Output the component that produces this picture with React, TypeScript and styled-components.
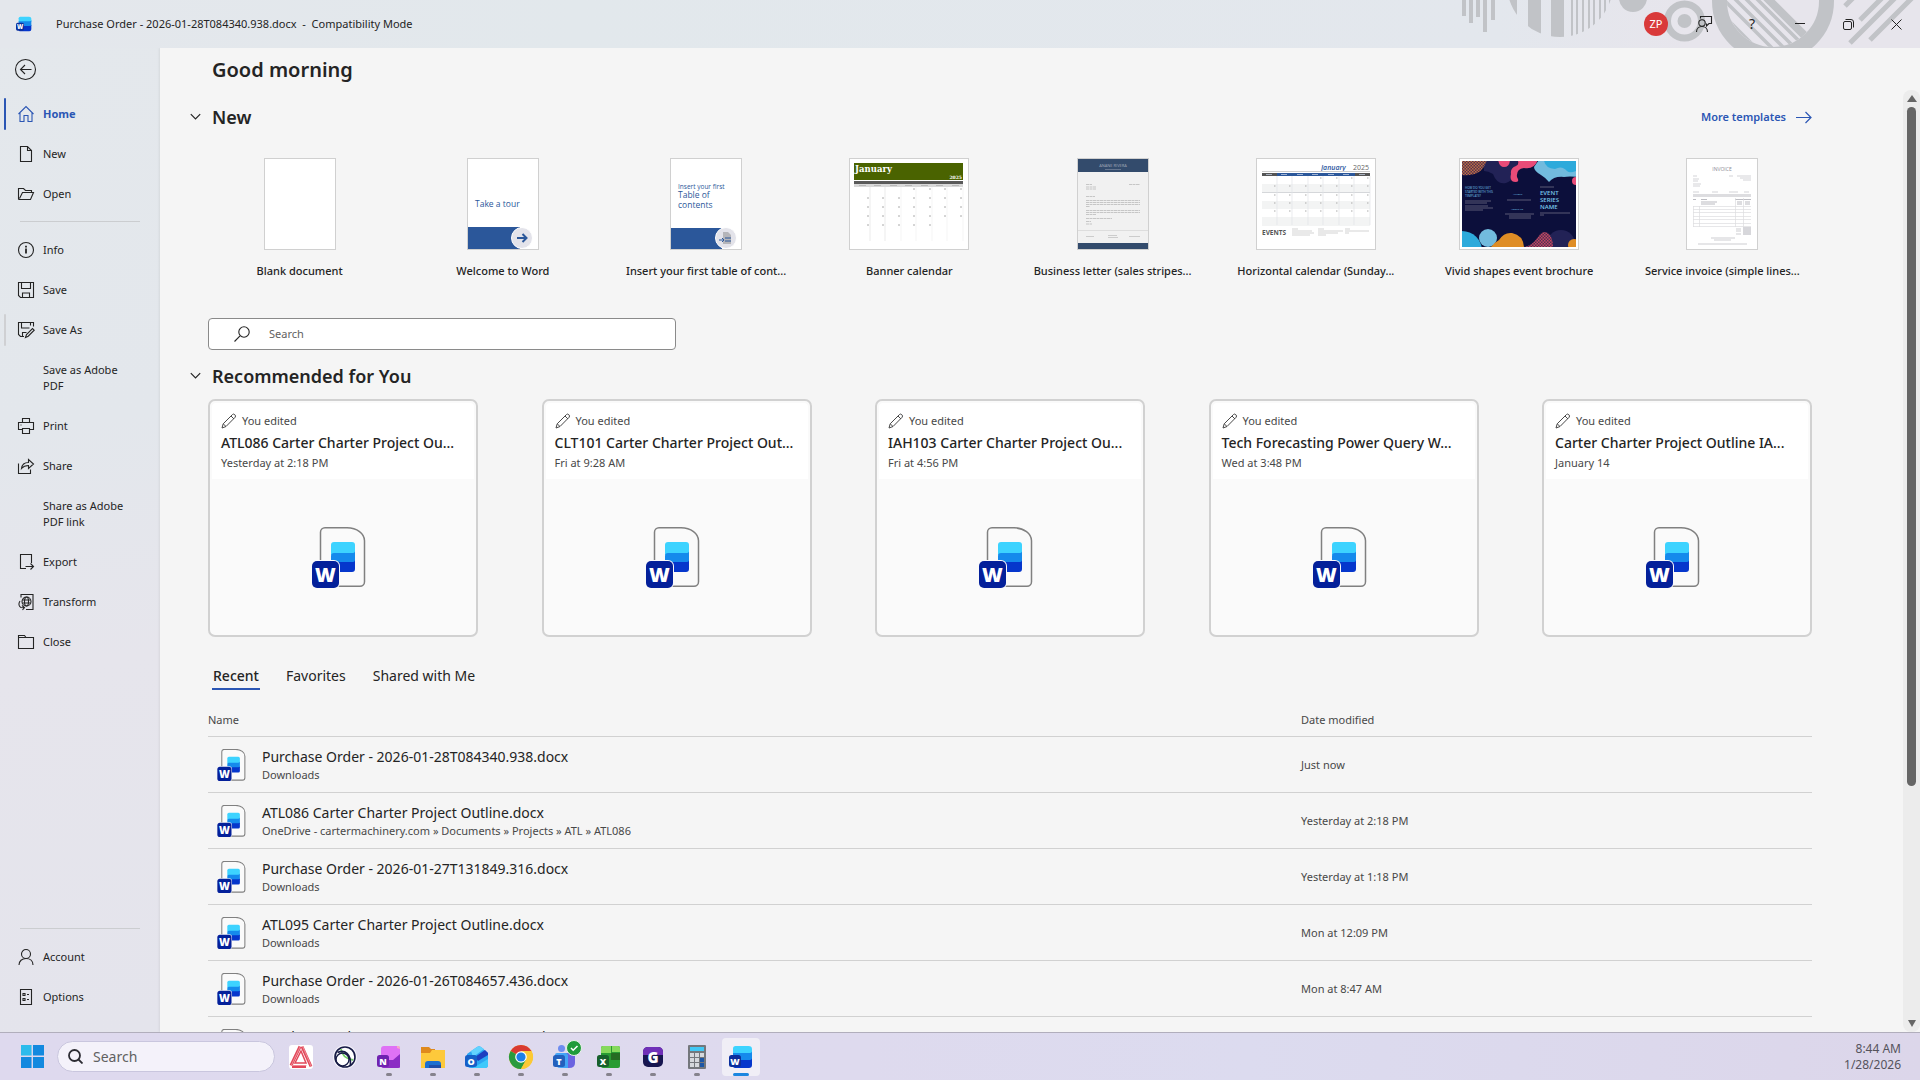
import React from "react";
import styled, { createGlobalStyle } from "styled-components";

const ink = "#242424";
const soft = "#484848";
const blue = "#2b56b4";
const hair = "#d1d1d1";

const Global = createGlobalStyle`
  *, *::before, *::after { box-sizing: border-box; }
  body { margin: 0; color: ${ink}; font: 11px/16px "Noto Sans", "Open Sans", sans-serif; }
  button, input { font: inherit; color: inherit; }
  button { border: 0; padding: 0; background: none; text-align: left; }
  a { color: inherit; text-decoration: none; }
  h1, h2, p, ul { margin: 0; padding: 0; }
  ul { list-style: none; }
  svg { display: block; flex: none; }
`;

const Screen = styled.div`
  display: grid;
  grid-template-rows: 48px minmax(0, 1fr) 48px;
  height: 100vh;
  overflow: hidden;
  background: linear-gradient(172deg, #e4e8ec 0, #e3e7ec 32%, #e6e5ec 50%, #e4e4ec 78%, #dfe2ea 100%);
`;

/* ---------- title bar ---------- */
const TitleBar = styled.header`
  position: relative;
  display: flex;
  align-items: center;
  padding-left: 16px;
  overflow: hidden;
  background: linear-gradient(90deg, #e4e7ec, #e2e8ec 30%, #e3e7ed 78%, #e7e5ec 88%);
`;
const Pattern = styled.svg`
  position: absolute;
  top: 0;
  right: 0;
`;
const DocTitle = styled.span`
  flex: 1;
  margin-left: 24px;
  white-space: pre;
`;
const Avatar = styled.button`
  position: relative;
  width: 24px;
  height: 24px;
  margin-right: 12px;
  border-radius: 50%;
  background: #d93a3a;
  color: #fff;
  text-align: center;
`;
const WindowButton = styled.button`
  position: relative;
  display: grid;
  place-items: center;
  width: 48px;
  height: 48px;
  font-size: 14px;
`;

/* ---------- sidebar ---------- */
const Body = styled.div`
  display: grid;
  grid-template-columns: 160px minmax(0, 1fr);
  min-height: 0;
`;
const Sidebar = styled.nav`
  display: flex;
  flex-direction: column;
  padding: 10px 0 15px;
`;
const BackButton = styled.button`
  width: 24px;
  height: 24px;
  margin: 0 0 12px 14px;
`;
const NavItem = styled.button<{ $mark?: string; $active?: boolean; $tall?: boolean }>`
  display: flex;
  align-items: center;
  gap: 8px;
  height: ${(p) => (p.$tall ? 56 : 40)}px;
  padding: 0 32px 0 13px;
  margin-left: 4px;
  position: relative;
  color: ${(p) => (p.$active ? blue : ink)};
  font-weight: ${(p) => (p.$active ? 700 : 400)};
  &::before {
    content: "";
    position: absolute;
    left: 0;
    width: 2px;
    height: 32px;
    border-radius: 1px;
    background: ${(p) => p.$mark ?? "transparent"};
  }
`;
const IconSlot = styled.span`
  display: grid;
  place-items: center;
  flex: none;
  width: 18px;
`;
const NavRule = styled.hr`
  width: 120px;
  height: 1px;
  margin: 7px 20px 8px;
  border: 0;
  background: #cbcdd0;
`;
const Spacer = styled.div`
  flex: 1;
`;

/* ---------- main pane ---------- */
const Pane = styled.main`
  display: flex;
  flex-direction: column;
  min-height: 0;
  background: #f5f5f5;
  box-shadow: 0 0 3px rgba(0, 0, 0, 0.12);
`;
const Greeting = styled.h1`
  flex: none;
  height: 42px;
  padding-left: 52px;
  font-size: 20px;
  line-height: 44px;
  font-weight: 600;
`;
const ScrollArea = styled.div`
  flex: 1;
  display: flex;
  min-height: 0;
`;
const Content = styled.div`
  flex: 1;
  min-width: 0;
  padding: 11px 91px 0 48px;
  overflow: hidden;
`;
const SectionHead = styled.div`
  display: flex;
  align-items: center;
  justify-content: space-between;
  height: 32px;
  margin-left: -24px;
`;
const SectionToggle = styled.button`
  display: flex;
  align-items: center;
  gap: 11px;
  padding-left: 6px;
`;
const SectionTitle = styled.h2`
  font-size: 18px;
  line-height: 32px;
  font-weight: 600;
`;
const MoreLink = styled.a`
  display: flex;
  align-items: center;
  gap: 10px;
  color: ${blue};
  font-weight: 600;
`;
const Templates = styled.ul`
  display: grid;
  grid-template-columns: repeat(8, minmax(0, 1fr));
  margin: 25px -12px 37px -10px;
`;
const Template = styled.button`
  display: flex;
  flex-direction: column;
  align-items: center;
  gap: 11px;
  width: 100%;
  font-weight: 500;
  line-height: 20px;
`;
const Thumb = styled.span<{ $w: number }>`
  width: ${(p) => p.$w}px;
  height: 92px;
  border: 1px solid #d0d0d0;
  background: #fff;
  overflow: hidden;
`;
const SearchBox = styled.label`
  display: flex;
  align-items: center;
  gap: 19px;
  width: 468px;
  height: 32px;
  margin-bottom: 10px;
  padding-left: 25px;
  border: 1px solid #8a8a8a;
  border-radius: 4px;
  background: #fff;
`;
const SearchInput = styled.input`
  flex: 1;
  min-width: 0;
  padding: 0;
  border: 0;
  outline: 0;
  background: transparent;
  &::placeholder { color: #616161; opacity: 1; }
`;
const Cards = styled.ul`
  display: flex;
  justify-content: space-between;
  margin: 7px 0 27px;
`;
const Card = styled.a`
  display: flex;
  flex-direction: column;
  width: 270px;
  height: 238px;
  padding: 2px;
  border: 2px solid ${hair};
  border-radius: 7px;
  background: #fafafa;
`;
const CardHead = styled.div`
  height: 76px;
  padding: 6px 9px 0;
  border-radius: 4px 4px 0 0;
  background: #fff;
  color: ${soft};
`;
const CardNote = styled.p`
  display: flex;
  align-items: center;
  gap: 5px;
  line-height: 24px;
`;
const CardTitle = styled.p`
  color: ${ink};
  font-size: 14px;
  line-height: 20px;
  font-weight: 500;
  white-space: nowrap;
`;
const CardDate = styled.p`
  line-height: 20px;
`;
const CardArt = styled.div`
  flex: 1;
  display: grid;
  place-items: center;
  padding: 2px 8px 0 0;
`;
const Tabs = styled.div`
  display: flex;
  gap: 25px;
  padding-left: 4px;
  font-size: 14px;
`;
const Tab = styled.button<{ $on?: boolean }>`
  height: 26px;
  padding: 0 1px;
  line-height: 24px;
  border-bottom: 2px solid ${(p) => (p.$on ? blue : "transparent")};
  font-weight: ${(p) => (p.$on ? 500 : 400)};
`;
const Files = styled.table`
  width: 100%;
  margin-top: 15px;
  border-collapse: collapse;
  color: ${soft};
`;
const HeadCell = styled.th<{ $w?: string }>`
  height: 31px;
  padding: 0;
  width: ${(p) => p.$w ?? "auto"};
  border-bottom: 1px solid ${hair};
  font-weight: 400;
  text-align: left;
`;
const Cell = styled.td`
  height: 56px;
  padding: 2px 0 0;
  border-bottom: 1px solid ${hair};
`;
const FileLink = styled.a`
  display: flex;
  align-items: center;
  gap: 16px;
  padding-left: 9px;
`;
const FileName = styled.span`
  display: block;
  color: ${ink};
  font-size: 14px;
  line-height: 20px;
`;
const FilePlace = styled.span`
  display: block;
`;

const Track = styled.div`
  display: flex;
  flex-direction: column;
  align-items: center;
  justify-content: space-between;
  width: 17px;
  padding: 5px 0;
  border-radius: 8px;
  background: #ececec;
`;
const Thumbbar = styled.div`
  flex: 0 0 679px;
  width: 9px;
  margin-top: 5px;
  border-radius: 5px;
  background: #666;
`;

/* ---------- taskbar ---------- */
const Taskbar = styled.footer`
  display: flex;
  align-items: center;
  padding: 0 19px 0 21px;
  border-top: 1px solid #b1aebc;
  background: linear-gradient(90deg, #ded9ee, #dedaee 45%, #dcdbef 65%, #dcd6ea);
`;
const TaskSearch = styled.label`
  display: flex;
  align-items: center;
  gap: 10px;
  width: 218px;
  height: 31px;
  margin: 0 4px 0 13px;
  padding-left: 10px;
  border: 1px solid #c9c6de;
  border-radius: 16px;
  background: #f4f2fa;
  font-size: 14px;
`;
const TaskButton = styled.button<{ $state?: "open" | "active" }>`
  position: relative;
  display: grid;
  place-items: center;
  width: 38px;
  height: 38px;
  margin: 0 3px;
  border-radius: 4px;
  background: ${(p) => (p.$state === "active" ? "#f0eef6" : "none")};
  &::after {
    content: "";
    position: absolute;
    bottom: 0;
    left: 50%;
    width: ${(p) => (p.$state === "active" ? 16 : p.$state ? 6 : 0)}px;
    height: 3px;
    border-radius: 2px;
    transform: translateX(-50%);
    background: ${(p) => (p.$state === "active" ? "#1a86e0" : "#85828c")};
  }
`;
const Clock = styled.time`
  margin-left: auto;
  color: #55535c;
  font-size: 12px;
  text-align: right;
`;

/* ---------- drawings ---------- */
const paths: Record<string, React.ReactNode> = {
  home: <path d="M1.500 9 9 1.500 16.500 9M3 7.500v9h4V10.500h4v6h4V7.500" />,
  page: <path d="M3.500 1.500h7l4 4v11h-11zM10.500 1.500v4h4" />,
  open: <path d="M1.500 14.500v-11h5l2 2h6v2.500M1.500 14.500h12l3-7H5.500l-3 6" />,
  info: (
    <>
      <circle cx="9" cy="9" r="7.500" />
      <path d="M9 7.500v5M9 4.800v1.600" strokeWidth="1.800" />
    </>
  ),
  save: <path d="M1.500 1.500h15v15h-13l-2-2zM4.500 1.500v6h9v-6M5.500 16.500v-4.500h7v4.500" />,
  saveAs: (
    <>
      <path d="M7 15.500H3.500l-2-2v-12h15v4M4.500 1.500v5.500h8M5.500 15.500v-4h4M13.500 1.500v3" />
      <path d="m8.500 16.500 1-3L15.500 7.500l1.700 1.700-6 6z" />
    </>
  ),
  print: <path d="M5.500 5.500v-4h7v4M5.500 12.500h-4v-7h15v7h-4M5.500 11.500h7v5h-7zM3.500 8h1" />,
  share: <path d="M1.500 6.500v10h12v-4M4.500 11.500c.5-4 3-6 7-6V2.500l5 4.500-5 4.500V8.500c-3 0-5 .7-7 3z" />,
  exportDoc: <path d="M9 15.500H3.500v-14h11V10M8.500 13.500h8M13.500 10.500l3 3-3 3" />,
  transform: (
    <>
      <path d="M4 4.500v-3h12v15H9M3 8c-2 3-1 5.500 1 6.500l3 .3M5 12.500l2.500 2-2 2.500" />
      <circle cx="9.500" cy="8.500" r="4.500" />
      <ellipse cx="9.500" cy="8.500" rx="2" ry="4.500" />
      <path d="M5.500 7h8M5.500 10h8" />
    </>
  ),
  close: <path d="M1.500 15.500v-13h6l1.500 2h7.500v11zM1.500 4.500h7" />,
  account: (
    <>
      <circle cx="9" cy="6" r="4.500" />
      <path d="M2 17c0-4 3-6.500 7-6.500s7 2.500 7 6.500" />
    </>
  ),
  options: <path d="M3.500 1.500h11v15h-11zM6 5.500h2v2H6zM6 10.500h2v2H6zM10 6.500h2M10 11.500h2" />,
};
const Glyph = ({ name }: { name: string }) => (
  <svg width="18" height="18" viewBox="0 0 18 18" fill="none" stroke="currentColor" strokeWidth="1.100" aria-hidden="true">
    {paths[name]}
  </svg>
);

const Chevron = () => (
  <svg width="11" height="8" viewBox="0 0 11 8" fill="none" stroke={ink} strokeWidth="1.200">
    <path d="m.8 1.200 4.700 4.700 4.700-4.700" />
  </svg>
);

const WordFile = ({ width, height }: { width: number; height: number }) => (
  <svg width={width} height={height} viewBox="0 0 54 61" aria-hidden="true">
    <path d="M13 .8h22c10 0 17.500 6 17.500 13v41a4.500 4.500 0 0 1-4.500 4.500H13a4.500 4.500 0 0 1-4.500-4.500v-49.500A4.500 4.500 0 0 1 13 .8z" fill="#fafafa" stroke="#808080" strokeWidth={width < 40 ? 2 : 1.5} />
    <path d="M19 18q0-3 3-3h18q3 0 3 3v7q0 3-3 3H19z" fill="#3dd3ff" />
    <path d="M19 29q0-3 3-3h18q3 0 3-2v10q0 3-3 3H19z" fill="#158aec" />
    <path d="M19 38q0-3 3-3h18q3 0 3-2v9q0 3-3 3H19z" fill="#0536cc" />
    <rect x="-1" y="33" width="29" height="29" rx="6" fill="#fafafa" />
    <rect x="0" y="34" width="27" height="27" rx="5" fill="#04209a" />
    <text x="13.500" y="55" textAnchor="middle" fill="#fff" fontFamily="Open Sans, sans-serif" fontWeight="800" fontSize="20">W</text>
  </svg>
);

const AppTile = ({ kind, size = 24 }: { kind: string; size?: number }) => {
  const letter = (t: string, fill: string) => (
    <>
      <rect x="0" y="10" width="12" height="12" rx="2.500" fill={fill} />
      <text x="6" y="19.500" textAnchor="middle" fill="#fff" fontFamily="Open Sans, sans-serif" fontWeight="800" fontSize="9">{t}</text>
    </>
  );
  const art: Record<string, React.ReactNode> = {
    word: (
      <>
        <path d="M4 3.500Q4 1 6.500 1h13Q23 1 23 4v5H4z" fill="#3dd3ff" />
        <path d="M4 8h16q3 0 3-2v9H4z" fill="#158aec" />
        <path d="M4 15h16q3 0 3-2v7q0 3-3 3H6q-2 0-2-2z" fill="#0536cc" />
        {letter("W", "#0b2f9c")}
      </>
    ),
    onenote: (
      <>
        <path d="M4 4q0-3 3-3h14q2 0 2 3v18q0 1-2 1H7q-3 0-3-3z" fill="#df72f5" />
        <path d="M4 15h12l7-6v13q0 1-2 1H7q-3 0-3-3z" fill="#8b2cc4" />
        <path d="M20 1h1q2 0 2 3l-3-1z" fill="#f7a9c4" />
        {letter("N", "#7022b0")}
      </>
    ),
    folder: (
      <>
        <path d="M0 2h8l2 2h4v6H0z" fill="#df8a1d" />
        <path d="M0 8h9l2-3h13v18H0z" fill="#fdc93b" />
        <path d="M4 23v-4q0-3 3-3h10q3 0 3 3v4z" fill="#1b6fd0" />
        <path d="M8 20h12v3H8z" fill="#1d4da8" />
      </>
    ),
    outlook: (
      <>
        <path d="M2 9 12 2q2-1.500 4 0l7 6v12q0 3-3 3H6q-4 0-4-4z" fill="#2ba7f3" />
        <path d="m6 6 6-4q2-1.500 4 0l3 2-11 8z" fill="#63d3ff" />
        <path d="M10 12 20 5l3 3v2l-10 6z" fill="#1c3fc0" />
        <path d="m8 23 15-9v6q0 3-3 3z" fill="#3ec9fb" />
        {letter("O", "#1560c8")}
      </>
    ),
    chrome: (
      <>
        <circle cx="12" cy="12" r="12" fill="#fcc934" />
        <path d="M12 12 1.600 6A12 12 0 0 1 22.400 6z" fill="#d93a32" />
        <path d="M12 12 1.600 6A12 12 0 0 0 12 24l5-9z" fill="#299a3e" />
        <path d="M12 6h10.400A12 12 0 0 1 12 24l5-9z" fill="#fcc934" />
        <circle cx="12" cy="12" r="5.800" fill="#fff" />
        <circle cx="12" cy="12" r="4.600" fill="#1f7fe8" />
      </>
    ),
    teams: (
      <>
        <circle cx="8.500" cy="3.500" r="3.500" fill="#6d8cf0" />
        <path d="M10 8h12v10q0 5-6 5h-6z" fill="#6b63e0" />
        <path d="M2 10q0-2 2-2h8q3 0 3 3v12H8q-6 0-6-6z" fill="#43a4f5" />
        {letter("T", "#2360bd")}
        <circle cx="21" cy="3" r="7.500" fill="#1f9b3a" stroke="#e5f2e8" />
        <path d="m18 3 2.200 2.200L24.500 1" stroke="#fff" strokeWidth="1.500" fill="none" />
      </>
    ),
    excel: (
      <>
        <path d="M4 3q0-2 2-2h15q2 0 2 2v18q0 2-2 2H6q-2 0-2-2z" fill="#279b32" />
        <path d="M4 3q0-2 2-2h8v7H4zM15 1h6q2 0 2 2v4h-8z" fill="#86d95c" />
        <path d="M14 8h9v7h-9z" fill="#256c22" />
        {letter("X", "#17602c")}
      </>
    ),
    gapp: (
      <>
        <rect x="2" y="2" width="20" height="20" rx="5" fill="#171650" />
        <path d="M2 10V7q0-5 5-5h10q5 0 5 5v3z" fill="#7030b8" />
        <text x="12" y="17.500" textAnchor="middle" fill="#fff" fontFamily="Open Sans, sans-serif" fontWeight="800" fontSize="15">G</text>
      </>
    ),
    calc: (
      <>
        <rect x="3" y="0" width="18" height="24" rx="1" fill="#74777c" />
        <rect x="5" y="2" width="14" height="4" fill="#42c8f5" />
        {[8, 13, 18].map((y) => [5, 10, 15].map((x) => (
          <rect key={`${x}-${y}`} x={x} y={y} width="4" height="4" fill={x === 15 && y > 8 ? "#1d56a5" : "#d5d8dc"} />
        )))}
      </>
    ),
    anchor: (
      <>
        <rect width="24" height="24" rx="3" fill="#fff" />
        <path d="M11 1.500 2 20.500M13 1.500l9 20M3 21.500h14" fill="none" stroke="#e2485a" strokeWidth="3" />
        <path d="M12 6 6 18h11z" fill="#fff" stroke="#e2485a" strokeWidth="1.500" />
        <path d="M11.500 1 2 21M13.500 1 22 21M3 20.500h15" fill="none" stroke="#f8b7bd" strokeWidth=".6" />
      </>
    ),
    orb: (
      <>
        <circle cx="12" cy="12" r="12" fill="#f4f2fa" />
        <circle cx="12" cy="12" r="10" fill="#fff" stroke="#161a45" strokeWidth="1.600" />
        <path d="M8 4q1 9 12 11" fill="none" stroke="#6fce62" strokeWidth="1.800" />
        <path d="M4.500 7.500C12 4 18 9 17.500 20" fill="none" stroke="#161a45" strokeWidth="1.600" />
        <circle cx="9.500" cy="14.500" r="6.500" fill="none" stroke="#161a45" strokeWidth="1.400" />
      </>
    ),
    start: (
      <>
        <path d="M0 0h11v11H0z" fill="#2cbbec" />
        <path d="M12.500 0h11.500v11H12.500zM0 12.500h11V24H0zM12.500 12.500H24V24H12.500z" fill="#1389df" />
      </>
    ),
  };
  return (
    <svg width={size} height={size} viewBox="0 0 24 24" overflow="visible" aria-hidden="true">
      {art[kind]}
    </svg>
  );
};

const grey = "#c1c3c7";
const TitlePattern = () => (
  <Pattern width="520" height="48" viewBox="0 0 520 48" fill={grey} aria-hidden="true">
    <clipPath id="disc"><circle cx="160" cy="-16" r="53" /></clipPath>
    <clipPath id="well"><circle cx="373" cy="1" r="46" /></clipPath>
    <path d="M62 0h4v16h-4zM69 0h4v23h-4zM76 0h4v17h-4zM83 0h4v32h-4zM91 0h4v20h-4z" />
    <g clipPath="url(#disc)">
      <path d="M105 0h12v40h-12zM128 0h13v40h-13zM151 0h13v40h-13z" />
      {[171, 176, 182, 188, 193, 199, 204, 209].map((x) => <rect key={x} x={x} width="2" height="40" />)}
    </g>
    <circle cx="233" cy="-2" r="14" />
    <circle cx="284.500" cy="21" r="17" fill="none" stroke={grey} strokeWidth="7" />
    <circle cx="284.500" cy="21" r="7" />
    <circle cx="373" cy="1" r="53.500" fill="none" stroke={grey} strokeWidth="15" />
    <g clipPath="url(#well)" stroke={grey}>
      <path d="m312 4 60 60M324 0l60 60M334-2l60 60M343-4l60 60M352-6l60 60" strokeWidth="3.500" />
      <path d="m363-6 60 60" strokeWidth="8" />
    </g>
    <path d="m445 6 8-8M460 20l22-22M450 43l46-46M470 40l44-44" stroke={grey} strokeWidth="5" />
  </Pattern>
);

const font = "Open Sans, sans-serif";
const BlankArt = () => null;
const TourArt = () => (
  <svg width="70" height="90" viewBox="0 0 70 90">
    <text x="7" y="48" fill="#2b579a" fontFamily={font} fontSize="8.500">Take a tour</text>
    <path d="M0 68h70v22H0z" fill="#2b579a" />
    <path d="M52 68h18v22H52z" fill="#fff" />
    <circle cx="54" cy="79" r="10.500" fill="#e3e3ea" stroke="#fff" />
    <path d="M49 79h9M54.500 75l4 4-4 4" fill="none" stroke="#2b579a" strokeWidth="2" />
  </svg>
);
const TocArt = () => (
  <svg width="70" height="90" viewBox="0 0 70 90">
    <g fill="#2b579a" fontFamily={font}>
      <text x="7" y="30" fontSize="6.500">Insert your first</text>
      <text x="7" y="39" fontSize="8.500">Table of</text>
      <text x="7" y="49" fontSize="8.500">contents</text>
    </g>
    <path d="M0 69h51v21H0z" fill="#2b579a" />
    <circle cx="55" cy="79" r="10.500" fill="#e3e3ea" stroke="#fff" />
    <path d="M52 73h5l3 3v9h-8z" fill="#b5b5b9" />
    <path d="M48 81h4M51 79l2 2-2 2M54 79h6M54 82h6" stroke="#2b579a" fill="none" />
  </svg>
);
const BannerArt = () => (
  <svg width="118" height="90" viewBox="0 0 118 90">
    <path d="M4 4h109v17H4z" fill="#4a6300" />
    <text x="5" y="12.500" fill="#fff" fontFamily="DejaVu Serif, serif" fontWeight="700" fontSize="8.500">January</text>
    <text x="112" y="19.500" textAnchor="end" fill="#fff" fontFamily="DejaVu Serif, serif" fontWeight="700" fontSize="4.500">2025</text>
    <path d="M4 22h109v3H4z" fill="#5a5a5a" />
    <path d="M4 25h109v3H4z" fill="#d8d8d8" />
    {[20, 35, 51, 66, 82, 97, 113].map((x, i) => (
      <g key={x}>
        <path d={`M${x} 28v54`} stroke="#ebebeb" strokeWidth={i < 2 ? 1 : 0.5} />
        <path d={`M${x - 11} 26.500h7`} stroke="#aaa" strokeWidth=".7" />
        {[30, 39, 48, 57, 66].map((y, r) => ((r || i > 2) && (r < 4 || i < 5) ? <path key={y} d={`M${x - 3} ${y}h2`} stroke="#aaa" /> : null))}
      </g>
    ))}
  </svg>
);
const LetterArt = () => (
  <svg width="70" height="90" viewBox="0 0 70 90">
    <path d="M0 0h70v90H0z" fill="#f1f1f1" />
    <path d="M0 0h70v13H0zM0 84h70v6H0z" fill="#334b6c" />
    <text x="35" y="8" textAnchor="middle" fill="#a2aab8" fontFamily={font} fontSize="4">ANANE RIVERA</text>
    <path d="M27 10.500h16" stroke="#7d8aa0" strokeWidth=".7" />
    <g stroke="#aaa" strokeWidth=".6" strokeDasharray="3 .5">
      <path d="M8 25.500h6M51 25.500h11M8 28h10M8 30h10M8 37.500h9M8 59.500h26M8 62.500h5M8 65h6" />
      <path d="M8 41.500h54M8 43.500h54M8 45.500h54M8 47.500h4M8 51.500h54M8 53.500h54M8 55.500h10" />
    </g>
    <path d="M0 71.500h70" stroke="#ddd" />
    <path d="M8 77.500h8M30 76.500h9M30 78.500h10M51 77.500h11" stroke="#bbb" strokeWidth=".7" />
  </svg>
);
const HorizontalArt = () => (
  <svg width="118" height="90" viewBox="0 0 118 90">
    <text x="64" y="11" fill="#2b56a0" fontFamily={font} fontStyle="italic" fontWeight="600" fontSize="7">January</text>
    <text x="112" y="11" textAnchor="end" fill="#666" fontFamily={font} fontSize="7">2025</text>
    <path d="M5 12.500h108" stroke="#ccc" />
    <path d="M5 14h108v3H5z" fill="#2b579a" />
    <path d="M5 14h15v3H5zM98 14h15v3H98z" fill="#555" />
    <path d="M5 25h108v8H5zM5 42h108v8H5zM5 58h108v9H5z" fill="#f3f4f4" />
    <path d="M5 33.500h108" stroke="#d5d7da" />
    {[20, 35, 51, 66, 82, 97, 113].map((x, i) => (
      <g key={x}>
        <path d={`M${x} 17v49`} stroke="#e1e3e6" strokeWidth=".7" />
        <path d={`M${x - 11} 15.500h6`} stroke="#cdd8ec" strokeWidth=".7" />
        {[19, 27, 36, 44, 52].map((y, r) => ((r || i > 2) ? <path key={y} d={`M${x - 3} ${y}h1.500`} stroke="#aaa" /> : null))}
      </g>
    ))}
    <text x="5" y="76" fill="#555" fontFamily={font} fontWeight="700" fontSize="6.500">EVENTS</text>
    <path d="M35 70h6M61 70h6M88 70h5M35 72h20M61 72h25M88 72h24M35 74h22M61 74h20M88 74h4M35 76h18M61 76h8" stroke="#b5b5b5" strokeWidth=".6" />
  </svg>
);
const VividArt = () => (
  <svg width="118" height="90" viewBox="0 0 118 90">
    <defs>
      <pattern id="dots" width="3" height="3" patternUnits="userSpaceOnUse">
        <path d="M0 0h3v3H0z" fill="#533052" /><path d="M0 0h1.500v1.500H0zM1.500 1.500H3V3H1.500z" fill="#bd7041" />
      </pattern>
      <pattern id="dots2" width="3" height="3" patternUnits="userSpaceOnUse">
        <path d="M0 0h3v3H0z" fill="#54314f" /><path d="M0 0h1.500v1.500H0zM1.500 1.500H3V3H1.500z" fill="#c34465" />
      </pattern>
      <clipPath id="sheet"><path d="M2 2h114v86H2z" /></clipPath>
    </defs>
    <g clipPath="url(#sheet)">
      <path d="M0 0h118v90H0z" fill="#0c0f3b" />
      <path d="M24 0h34q0 20-12 24-9 2-13-9-5-3-9-3z" fill="#222256" />
      <path d="M0 0h27q-4 18-25 16z" fill="url(#dots)" />
      <path d="M38 0h12q0 8-6 8-5 0-6-8zM57 0h21q-3 11-14 9-8 1-7 9 3 5-1 5-7 0-5-8-1-6 5-8 4-2 1-7z" fill="#e94b78" />
      <path d="M80 0h38v18q-9-1-14 0-10-1-15 5-3-4-8-7-7-4-7-8 4-6 6-8z" fill="#72bbde" />
      <path d="M84 0h34v11q-8 4-11 1-5-6-12-2-11-1-11-10z" fill="#2daadb" />
      <circle cx="116" cy="22" r="4" fill="#e94b78" />
      <circle cx="28" cy="79" r="9" fill="#72bbde" /><circle cx="2" cy="92" r="20" fill="#2daadb" />
      <circle cx="101" cy="85" r="14" fill="#222256" />
      <path d="M64 88q8-1 14-10 6-9 12-2 3 5 3 12z" fill="url(#dots2)" />
      <path d="M31 88q4-5 8-7 5-8 13-7 11 2 12 14z" fill="#df8d25" />
      <circle cx="114" cy="86" r="6" fill="#df8d25" />
      <g fill="#79c9ec" fontFamily={font}>
        <text x="5" y="30" fontSize="3">HOW DO YOU GET</text>
        <text x="5" y="34" fontSize="3">STARTED WITH THIS</text>
        <text x="5" y="38" fontSize="3">TEMPLATE?</text>
        <text x="53" y="36" fontSize="2.500">ACCENT</text>
        <text x="51" y="51" fontSize="2.500">ABOUT US</text>
        <g fontSize="6" fontWeight="600"><text x="80" y="36">EVENT</text><text x="80" y="43">SERIES</text><text x="80" y="50">NAME</text></g>
      </g>
      <path d="M5 42h26M5 44h22M5 47h23M5 49h28M5 51h18M80 54h30M80 56h4M47 41h24M45 55h29M49 57h22M49 59h22M80 28h14" stroke="#918f9d" strokeWidth=".6" />
    </g>
  </svg>
);
const InvoiceArt = () => (
  <svg width="70" height="90" viewBox="0 0 70 90">
    <text x="35" y="12" textAnchor="middle" fill="#8b8b96" fontFamily={font} fontSize="5">INVOICE</text>
    <path d="M6 17h4M42 17h4M50 17h14M6 20h6M53 19h11M6 22h5M56 21h8M6 25h8M6 27h7M6 33h6M25 33h6M42 33h9M57 33h5" stroke="#b5b5bd" strokeWidth=".6" />
    <path d="M6 35h58v3H6z" fill="#dddde0" />
    <path d="M6 40.500h3M14 40.500h6M48 40.500h16M14 43h16M14 45h14M50 43h5M58 43h5M50 45h5M58 45h5" stroke="#8f8f98" strokeWidth=".6" />
    <path d="M6 47.500h58M6 50.500h58M6 53.500h58M6 57.500h58M6 60.500h58M6 64.500h58M6 67.500h58M6.500 47v21M12.500 47v21M48.500 39v29M56.500 39v36" stroke="#dcdce0" strokeWidth=".7" />
    <path d="M56 68h8v8h-8z" fill="#d7d7db" />
    <path d="M49 70h5M49 72h5M49 75h5M24 79h24M27 81h17M11 85h49" stroke="#ababb2" strokeWidth=".6" />
  </svg>
);

/* ---------- data ---------- */
const mainNav = [
  { label: "Info", icon: "info" },
  { label: "Save", icon: "save" },
  { label: "Save As", icon: "saveAs", mark: "#cfd0d3" },
  { label: "Save as Adobe PDF", tall: true },
  { label: "Print", icon: "print" },
  { label: "Share", icon: "share" },
  { label: "Share as Adobe PDF link", tall: true },
  { label: "Export", icon: "exportDoc" },
  { label: "Transform", icon: "transform" },
  { label: "Close", icon: "close" },
];
const templates = [
  { name: "Blank document", w: 72, Art: BlankArt },
  { name: "Welcome to Word", w: 72, Art: TourArt },
  { name: "Insert your first table of cont...", w: 72, Art: TocArt },
  { name: "Banner calendar", w: 120, Art: BannerArt },
  { name: "Business letter (sales stripes...", w: 72, Art: LetterArt },
  { name: "Horizontal calendar (Sunday...", w: 120, Art: HorizontalArt },
  { name: "Vivid shapes event brochure", w: 120, Art: VividArt },
  { name: "Service invoice (simple lines...", w: 72, Art: InvoiceArt },
];
const cards = [
  ["ATL086 Carter Charter Project Ou...", "Yesterday at 2:18 PM"],
  ["CLT101 Carter Charter Project Out...", "Fri at 9:28 AM"],
  ["IAH103 Carter Charter Project Ou...", "Fri at 4:56 PM"],
  ["Tech Forecasting Power Query W...", "Wed at 3:48 PM"],
  ["Carter Charter Project Outline IA...", "January 14"],
];
const files = [
  ["Purchase Order - 2026-01-28T084340.938.docx", "Downloads", "Just now"],
  ["ATL086 Carter Charter Project Outline.docx", "OneDrive - cartermachinery.com » Documents » Projects » ATL » ATL086", "Yesterday at 2:18 PM"],
  ["Purchase Order - 2026-01-27T131849.316.docx", "Downloads", "Yesterday at 1:18 PM"],
  ["ATL095 Carter Charter Project Outline.docx", "Downloads", "Mon at 12:09 PM"],
  ["Purchase Order - 2026-01-26T084657.436.docx", "Downloads", "Mon at 8:47 AM"],
  ["Purchase Order - 2026-01-26T084312.479.docx", "Downloads", "Mon at 8:43 AM"],
];
const tasks: [string, string, ("open" | "active")?][] = [
  ["anchor", "Adobe app"],
  ["orb", "Network client"],
  ["onenote", "OneNote", "open"],
  ["folder", "File Explorer", "open"],
  ["outlook", "Outlook", "open"],
  ["chrome", "Chrome", "open"],
  ["teams", "Teams", "open"],
  ["excel", "Excel", "open"],
  ["gapp", "G", "open"],
  ["calc", "Calculator", "open"],
  ["word", "Word", "active"],
];

const Nav = ({ label, icon, mark, tall, active }: { label: string; icon?: string; mark?: string; tall?: boolean; active?: boolean }) => (
  <NavItem $mark={mark} $tall={tall} $active={active}>
    <IconSlot>{icon && <Glyph name={icon} />}</IconSlot>
    {label}
  </NavItem>
);

export default function App() {
  return (
    <>
      <Global />
      <Screen>
        <TitleBar>
          <TitlePattern />
          <AppTile kind="word" size={16} />
          <DocTitle>{"Purchase Order - 2026-01-28T084340.938.docx  -  Compatibility Mode"}</DocTitle>
          <Avatar>ZP</Avatar>
          <WindowButton aria-label="Feedback">
            <svg width="18" height="18" viewBox="0 0 18 18" fill="none" stroke={ink} strokeWidth="1.100">
              <circle cx="7" cy="8" r="3.200" />
              <path d="M1.500 17c0-3.500 2.500-5.500 5.500-5.500s5.500 2 5.500 5.500M5.500 3.500v-2h11v7h-2.500l-2.500 2.500V8.500" />
            </svg>
          </WindowButton>
          <WindowButton aria-label="Help">?</WindowButton>
          <WindowButton aria-label="Minimize">
            <svg width="10" height="10" viewBox="0 0 10 10" stroke={ink}><path d="M0 4.500h10" /></svg>
          </WindowButton>
          <WindowButton aria-label="Restore">
            <svg width="11" height="11" viewBox="0 0 11 11" fill="none" stroke={ink}>
              <rect x=".5" y="2.500" width="8" height="8" rx="1.500" />
              <path d="M2.500.5H8a2.500 2.500 0 0 1 2.500 2.500v5.500" />
            </svg>
          </WindowButton>
          <WindowButton aria-label="Close window">
            <svg width="11" height="11" viewBox="0 0 11 11" stroke={ink}><path d="m.5.5 10 10M10.500.5l-10 10" /></svg>
          </WindowButton>
        </TitleBar>

        <Body>
          <Sidebar>
            <BackButton aria-label="Back">
              <svg width="24" height="24" viewBox="0 0 24 24" fill="none" stroke={ink} strokeWidth="1.100">
                <circle cx="11.500" cy="11.500" r="10" />
                <path d="M17.500 11.500h-11M11 7l-4.500 4.500L11 16" />
              </svg>
            </BackButton>
            <Nav label="Home" icon="home" mark={blue} active />
            <Nav label="New" icon="page" />
            <Nav label="Open" icon="open" />
            <NavRule />
            {mainNav.map((n) => <Nav key={n.label} {...n} />)}
            <Spacer />
            <NavRule />
            <Nav label="Account" icon="account" />
            <Nav label="Options" icon="options" />
          </Sidebar>

          <Pane>
            <Greeting>Good morning</Greeting>
            <ScrollArea>
              <Content>
                <SectionHead>
                  <SectionToggle><Chevron /><SectionTitle>New</SectionTitle></SectionToggle>
                  <MoreLink href="#templates">
                    More templates
                    <svg width="16" height="13" viewBox="0 0 16 13" fill="none" stroke={blue} strokeWidth="1.200">
                      <path d="M0 6.500h15M9.500 1 15 6.500 9.500 12" />
                    </svg>
                  </MoreLink>
                </SectionHead>
                <Templates>
                  {templates.map(({ name, w, Art }) => (
                    <li key={name}>
                      <Template><Thumb $w={w}><Art /></Thumb>{name}</Template>
                    </li>
                  ))}
                </Templates>

                <SearchBox>
                  <svg width="16" height="16" viewBox="0 0 16 16" fill="none" stroke={ink} strokeWidth="1.100">
                    <circle cx="10" cy="6" r="5.200" /><path d="M6 9.800.5 15.500" />
                  </svg>
                  <SearchInput placeholder="Search" aria-label="Search files" />
                </SearchBox>

                <SectionHead>
                  <SectionToggle><Chevron /><SectionTitle>Recommended for You</SectionTitle></SectionToggle>
                </SectionHead>
                <Cards>
                  {cards.map(([title, date]) => (
                    <li key={title}>
                      <Card href="#file">
                        <CardHead>
                          <CardNote>
                            <svg width="16" height="16" viewBox="0 0 16 16" fill="none" stroke={soft}>
                              <path d="m1 15 1.200-4.200L11.500 1.500q1-1 2.300.2t.4 2.500L5 13.500zM10 3l3 3M2.200 10.800 5 13.500" />
                            </svg>
                            You edited
                          </CardNote>
                          <CardTitle>{title}</CardTitle>
                          <CardDate>{date}</CardDate>
                        </CardHead>
                        <CardArt><WordFile width={54} height={61} /></CardArt>
                      </Card>
                    </li>
                  ))}
                </Cards>

                <Tabs role="tablist">
                  <Tab role="tab" aria-selected="true" $on>Recent</Tab>
                  <Tab role="tab" aria-selected="false">Favorites</Tab>
                  <Tab role="tab" aria-selected="false">Shared with Me</Tab>
                </Tabs>
                <Files>
                  <thead>
                    <tr><HeadCell>Name</HeadCell><HeadCell $w="511px">Date modified</HeadCell></tr>
                  </thead>
                  <tbody>
                    {files.map(([name, place, date]) => (
                      <tr key={name}>
                        <Cell>
                          <FileLink href="#file">
                            <WordFile width={29} height={32} />
                            <span><FileName>{name}</FileName><FilePlace>{place}</FilePlace></span>
                          </FileLink>
                        </Cell>
                        <Cell>{date}</Cell>
                      </tr>
                    ))}
                  </tbody>
                </Files>
              </Content>
              <Track>
                <svg width="10" height="7" viewBox="0 0 10 7" fill="#666"><path d="M5 0 10 7H0z" /></svg>
                <Thumbbar />
                <Spacer />
                <svg width="8" height="7" viewBox="0 0 8 7" fill="#666"><path d="M0 0h8L4 7z" /></svg>
              </Track>
            </ScrollArea>
          </Pane>
        </Body>

        <Taskbar>
          <button aria-label="Start"><AppTile kind="start" size={23} /></button>
          <TaskSearch>
            <svg width="15" height="15" viewBox="0 0 15 15" fill="none" stroke="#2c2c33" strokeWidth="1.800">
              <circle cx="6.500" cy="6.500" r="5.500" /><path d="m10.500 10.500 4 4" />
            </svg>
            <SearchInput placeholder="Search" aria-label="Search Windows" />
          </TaskSearch>
          {tasks.map(([kind, label, state]) => (
            <TaskButton key={kind} aria-label={label} $state={state}><AppTile kind={kind} /></TaskButton>
          ))}
          <Clock>8:44 AM<br />1/28/2026</Clock>
        </Taskbar>
      </Screen>
    </>
  );
}
